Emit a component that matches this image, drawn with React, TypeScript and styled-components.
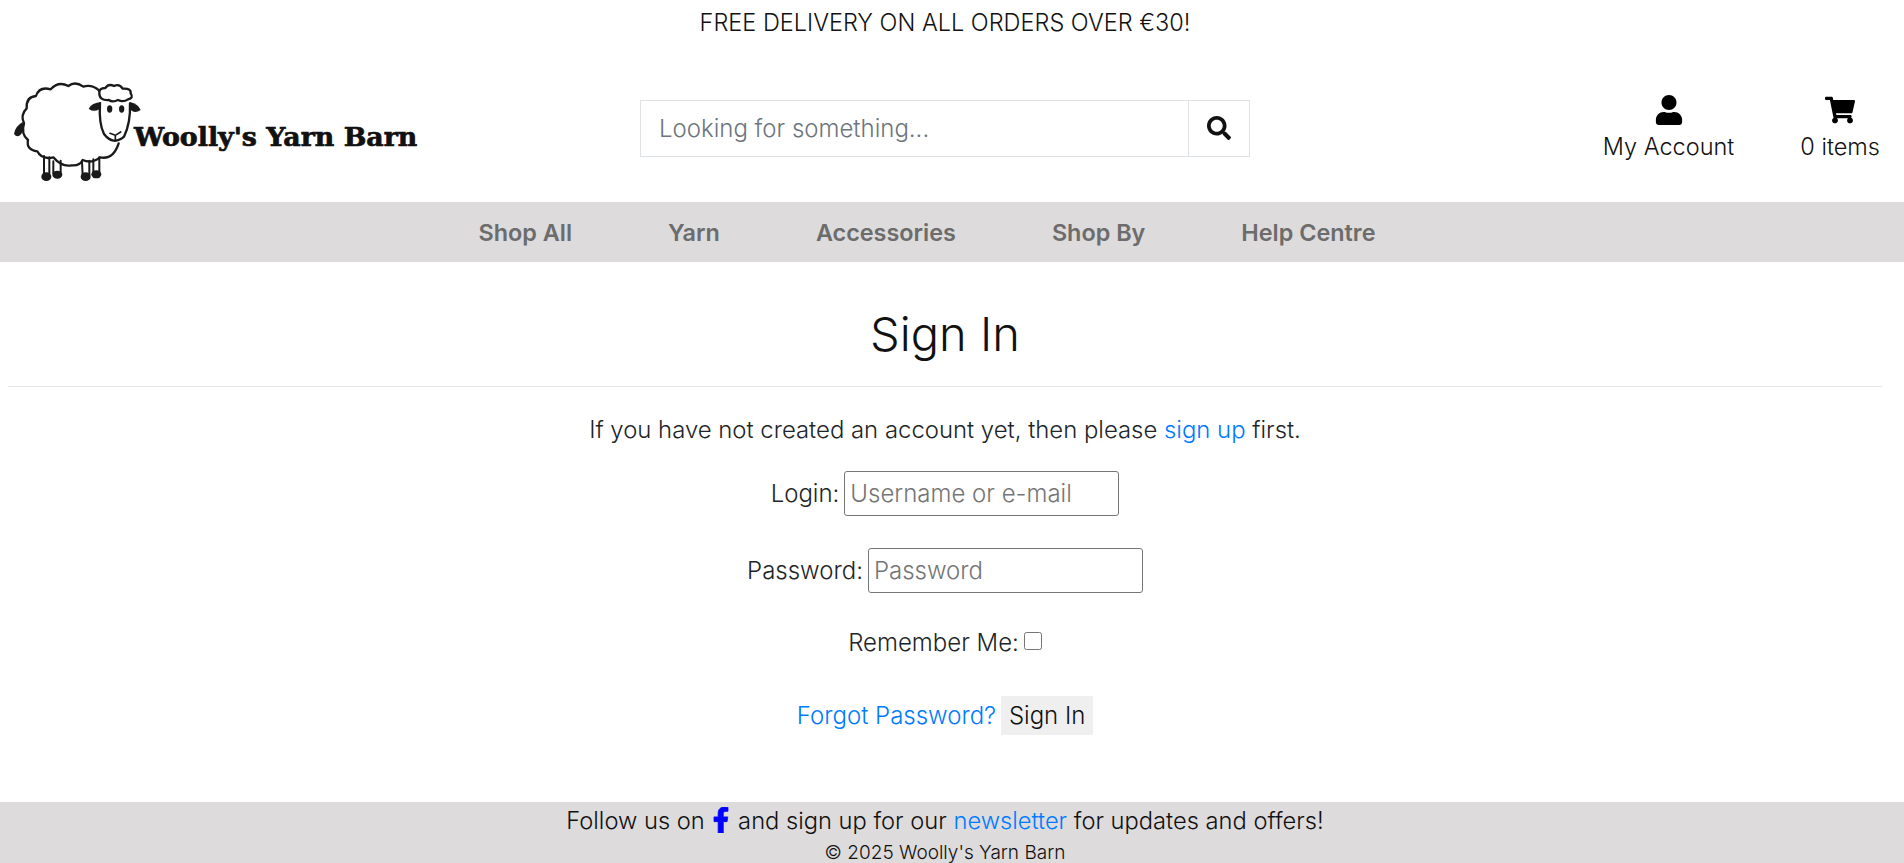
import styled, { createGlobalStyle } from "styled-components";
import { FaUser, FaShoppingCart, FaSearch, FaFacebookF } from "react-icons/fa";

const GlobalStyle = createGlobalStyle`
    * { box-sizing: border-box; }
    body {
        margin: 0;
        background: #fff;
        color: #212529;
        font-family: "Inter", "Liberation Sans", sans-serif;
        font-weight: 300;
        font-size: 24px;
    }
`;

const Page = styled.div`
    height: 863px;
    display: flex;
    flex-direction: column;
    overflow: hidden;
`;

const Banner = styled.div`
    height: 44px;
    margin-bottom: 2px;
    padding-right: 14px;
    display: flex;
    align-items: center;
    justify-content: center;
    color: #111;
    font-size: 23.5px;
`;

const Header = styled.header`
    height: 156px;
    display: flex;
    align-items: center;
    padding-right: 24px;
`;

const LogoWrap = styled.div`
    width: 640px;
    align-self: flex-start;
    padding-top: 14px;
`;

const SearchBox = styled.form`
    width: 610px;
    height: 57px;
    margin-top: 8px;
    display: flex;
    border: 1px solid #dee2e6;
`;

const SearchInput = styled.input`
    flex: 1;
    min-width: 0;
    border: 0;
    outline: 0;
    padding: 0 18px;
    font: inherit;
    &::placeholder { color: #6c757d; opacity: 1; }
`;

const SearchButton = styled.button`
    width: 61px;
    border: 0;
    border-left: 1px solid #dee2e6;
    background: #fff;
    color: #111;
    font-size: 24px;
    display: flex;
    align-items: center;
    justify-content: center;
    padding: 0;
`;

const HeaderLinks = styled.div`
    margin-left: auto;
    margin-top: 11px;
    display: flex;
    gap: 66px;
`;

const HeaderLink = styled.a`
    display: flex;
    flex-direction: column;
    align-items: center;
    gap: 5px;
    color: #111;
    font-size: 23.5px;
    line-height: 34px;
    svg { font-size: 30px; color: #000; }
`;

const Nav = styled.nav`
    height: 60px;
    background: #dddbdc;
    display: flex;
    align-items: center;
    justify-content: center;
    gap: 96px;
    padding-right: 50px;
`;

const NavLink = styled.a`
    color: #6c6c6c;
    font-weight: 600;
    font-size: 23.4px;
`;

const Main = styled.main`
    flex: 1;
    padding: 0 22px 0 8px;
    display: flex;
    flex-direction: column;
    align-items: center;
`;

const Title = styled.h1`
    align-self: stretch;
    margin: 0;
    height: 125px;
    padding-top: 43px;
    text-align: center;
    font-size: 47px;
    font-weight: 300;
    line-height: 58px;
    color: #111;
    border-bottom: 1px solid #e6e6e6;
`;

const Intro = styled.p`
    margin: 25px 0 0;
    font-size: 23.9px;
    line-height: 36px;
`;

const Link = styled.a`
    color: #007bff;
`;

const Row = styled.div<{ $top: number }>`
    margin-top: ${p => p.$top}px;
    display: flex;
    align-items: center;
    gap: 5px;
`;

const FieldInput = styled.input`
    width: 275px;
    height: 45px;
    border: 1px solid #767676;
    border-radius: 3px;
    padding: 0 5px;
    font: inherit;
    &::placeholder { color: #757575; opacity: 1; }
`;

const Check = styled.input`
    width: 18px;
    height: 18px;
    margin: 0 0 4px;
`;

const SubmitButton = styled.button`
    height: 39px;
    width: 92px;
    border: 0;
    padding: 0;
    background: #efefef;
    color: #111;
    font: inherit;
`;

const Footer = styled.footer`
    height: 61px;
    padding-right: 14px;
    background: #dddbdc;
    text-align: center;
    color: #111;
`;

const FollowLine = styled.div`
    font-size: 23.7px;
    line-height: 38px;
    svg {
        color: #00f;
        font-size: 26px;
        margin: 0 -3px;
        vertical-align: -4px;
        stroke: currentColor;
        stroke-width: 16;
    }
`;

const Copyright = styled.div`
    padding-top: 3px;
    font-size: 19px;
    line-height: 19px;
`;

const LogoText = styled.text`
    font-family: "DejaVu Serif", serif;
    font-weight: 700;
    font-size: 76px;
    fill: #111;
    stroke: #111;
    stroke-width: 2px;
`;

const Logo = () => (
    <svg width="450" height="140" viewBox="0 0 1350 420" role="img">
        <g fill="none" stroke="#1a1a1a" strokeWidth="7" strokeLinecap="round" strokeLinejoin="round">
            <path d="M298 92 Q275 72 250 80 Q225 62 205 78 Q175 62 152 88 Q118 78 108 108 Q78 110 80 145 Q60 165 72 190 Q62 222 84 240 Q78 270 112 274 Q125 300 160 292 Q185 322 215 316 Q240 318 248 300 Q275 312 300 292 Q340 300 356 250" fill="#fff" />
            <path d="M300 130 Q296 190 312 222 Q340 258 372 230 Q392 190 390 130" fill="#fff" />
            <path d="M298 100 Q296 84 316 84 Q326 70 342 78 Q358 70 368 86 Q394 84 392 100 Q402 114 384 118 Q370 128 354 120 Q338 128 326 120 Q298 122 298 100 Z" fill="#fff" />
            <path d="M330 220 L346 226 L362 216 M346 226 L346 240" strokeWidth="5" />
            <path d="M132 288 L132 340 M148 292 L148 340 M160 304 L160 340 M182 302 L182 340 M246 306 L248 346 M268 302 L268 346 M280 298 L280 336 M298 292 L298 336" strokeWidth="6" />
        </g>
        <g fill="#1a1a1a">
            <ellipse cx="329" cy="147" rx="8" ry="11" />
            <ellipse cx="365" cy="147" rx="8" ry="11" />
            <path d="M304 126 Q275 128 266 146 Q280 158 298 148 Z" />
            <path d="M390 126 Q415 132 422 150 Q405 162 392 150 Z" />
            <path d="M68 186 Q44 200 42 222 Q52 236 64 222 Q74 204 68 186 Z" />
            <ellipse cx="139" cy="350" rx="15" ry="13" />
            <ellipse cx="172" cy="344" rx="15" ry="12" />
            <ellipse cx="257" cy="350" rx="15" ry="13" />
            <ellipse cx="289" cy="343" rx="15" ry="12" />
        </g>
        <LogoText x="402" y="257" textLength="850" lengthAdjust="spacingAndGlyphs">Woolly's Yarn Barn</LogoText>
    </svg>
);

const App = () => (
    <Page>
        <GlobalStyle />
        <Banner>FREE DELIVERY ON ALL ORDERS OVER €30!</Banner>
        <Header>
            <LogoWrap><Logo /></LogoWrap>
            <SearchBox>
                <SearchInput placeholder="Looking for something..." />
                <SearchButton type="button"><FaSearch /></SearchButton>
            </SearchBox>
            <HeaderLinks>
                <HeaderLink><FaUser />My Account</HeaderLink>
                <HeaderLink><FaShoppingCart />0 items</HeaderLink>
            </HeaderLinks>
        </Header>
        <Nav>
            <NavLink>Shop All</NavLink>
            <NavLink>Yarn</NavLink>
            <NavLink>Accessories</NavLink>
            <NavLink>Shop By</NavLink>
            <NavLink>Help Centre</NavLink>
        </Nav>
        <Main>
            <Title>Sign In</Title>
            <Intro>If you have not created an account yet, then please <Link>sign up</Link> first.</Intro>
            <Row $top={23}>Login: <FieldInput placeholder="Username or e-mail" /></Row>
            <Row $top={32}>Password: <FieldInput type="text" placeholder="Password" /></Row>
            <Row $top={35}>Remember Me: <Check type="checkbox" /></Row>
            <Row $top={39}><Link>Forgot Password?</Link><SubmitButton>Sign In</SubmitButton></Row>
        </Main>
        <Footer>
            <FollowLine>Follow us on <FaFacebookF /> and sign up for our <Link>newsletter</Link> for updates and offers!</FollowLine>
            <Copyright>© 2025 Woolly's Yarn Barn</Copyright>
        </Footer>
    </Page>
);

export default App;
